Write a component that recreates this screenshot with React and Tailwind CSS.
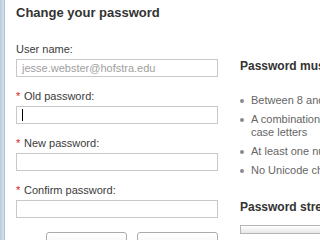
export default function App() {
  const font = { fontFamily: '"Liberation Sans", Arial, sans-serif' };
  const Field = ({ label, req, children }) => (
    <div className="flex flex-col mb-[12px]">
      <div className="h-[14px] leading-[14px] text-[11px] text-[#3b3b3b] flex items-center">
        {req && <span className="text-[#e02020] w-[8px] text-[11px] leading-[14px]">*</span>}
        <span>{label}</span>
      </div>
      <div className="mt-[3px] h-[18px] border border-[#c8c8c8] bg-white flex items-center px-[5px] text-[11px] text-[#a0a0a0]">
        {children}
      </div>
    </div>
  );
  const Item = ({ children }) => (
    <li className="flex items-start mb-[6px]">
      <span className="w-[4px] h-[4px] rounded-full bg-[#8a8a8a] mt-[5px] mr-[7px] shrink-0" />
      <span className="leading-[13px] w-[175px]">{children}</span>
    </li>
  );
  return (
    <div className="w-[320px] h-[240px] overflow-hidden bg-white flex" style={font}>
      <div className="w-[5px] h-full shrink-0 bg-gradient-to-r from-[#b9c9dc] to-[#d7e1ec] border-r border-[#aebfd3]" />
      <div className="flex flex-col pl-[11px] pt-[5px]">
        <div className="h-[16px] leading-[16px] text-[13px] font-bold text-[#333] whitespace-nowrap">Change your password</div>
        <div className="flex mt-[21px]">
          <div className="w-[202px] shrink-0 flex flex-col">
            <Field label="User name:">jesse.webster@hofstra.edu</Field>
            <Field label="Old password:" req>
              <span className="w-[1px] h-[12px] bg-black" />
            </Field>
            <Field label="New password:" req />
            <Field label="Confirm password:" req />
            <div className="flex gap-[10px] pl-[30px] mt-[2px]">
              <div className="w-[81px] h-[22px] rounded-[3px] border border-[#ababab] bg-gradient-to-b from-white to-[#f0f0f0]" />
              <div className="w-[81px] h-[22px] rounded-[3px] border border-[#ababab] bg-gradient-to-b from-white to-[#f0f0f0]" />
            </div>
          </div>
          <div className="ml-[22px] w-[200px] shrink-0 flex flex-col pt-[17px]">
            <div className="h-[14px] leading-[14px] text-[12px] font-bold text-[#333] whitespace-nowrap">Password must contain:</div>
            <ul className="mt-[21px] text-[11px] text-[#666]">
              <Item>Between 8 and 32 characters</Item>
              <Item>A combination of upper and lower case letters</Item>
              <Item>At least one number</Item>
              <Item>No Unicode characters</Item>
            </ul>
            <div className="mt-[17px] h-[14px] leading-[14px] text-[12px] font-bold text-[#333] whitespace-nowrap">Password strength:</div>
            <div className="mt-[11px] h-[9px] w-[180px] border border-[#b5b5b5] bg-gradient-to-b from-white to-[#e6e6e6]" />
          </div>
        </div>
      </div>
    </div>
  );
}
